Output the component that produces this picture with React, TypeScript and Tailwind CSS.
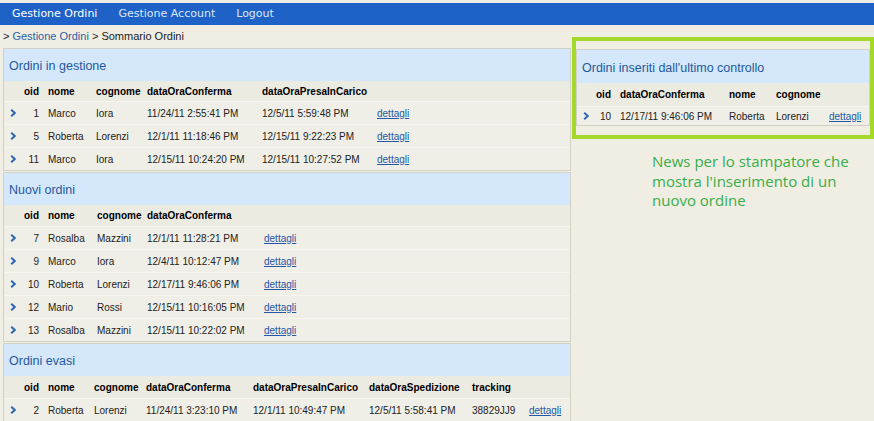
import React from "react";

type Col = { w: number; right?: boolean };

const Arrow = () => (
  <svg width="6" height="8" viewBox="0 0 6 8">
    <path d="M1.2 0.8 L4.8 4 L1.2 7.2" stroke="#2a66b4" strokeWidth="2" fill="none" />
  </svg>
);

function Table({ cols, head, rows, headH, rowH }: { cols: Col[]; head: string[]; rows: string[][]; headH: string; rowH: string }) {
  return (
    <div className="font-['Liberation_Sans',Arial,sans-serif] text-[10px] text-[#222]">
      <div className={`flex items-center font-bold text-black ${headH}`}>
        <div className="w-[18px] shrink-0" />
        {head.map((h, i) => (
          <div key={i} style={{ width: cols[i].w }} className={`shrink-0 whitespace-nowrap ${cols[i].right ? "text-right pr-[5px]" : "pl-[4px]"}`}>
            {h}
          </div>
        ))}
      </div>
      {rows.map((r, ri) => (
        <div key={ri} className={`flex items-center border-t border-[#f6f5f0] bg-[#efeee7] ${rowH}`}>
          <div className="w-[18px] shrink-0 flex justify-center">
            <Arrow />
          </div>
          {r.map((c, i) => (
            <div key={i} style={{ width: cols[i].w }} className={`shrink-0 whitespace-nowrap ${cols[i].right ? "text-right pr-[5px]" : "pl-[4px]"}`}>
              {c}
            </div>
          ))}
          <a className="pl-[4px] text-[#2457a6] underline whitespace-nowrap">dettagli</a>
        </div>
      ))}
    </div>
  );
}

function Panel({ title, headerH, children }: { title: string; headerH: string; children: React.ReactNode }) {
  return (
    <div className="border border-[#d3d1c6] bg-[#ecebe2]">
      <div className={`${headerH} bg-[#d5e7fa] flex items-center pl-[5px] pt-[3px] font-['Liberation_Sans',Arial,sans-serif] text-[12.5px] text-[#1f5a9e]`}>
        {title}
      </div>
      {children}
    </div>
  );
}

export default function App() {
  return (
    <div className="w-[874px] h-[421px] overflow-hidden bg-[#f0eee3] pt-[3px]">
      <div className="h-[22px] bg-[#1e62c8] flex items-center font-['DejaVu_Sans',Verdana,sans-serif] text-[11px]">
        <span className="ml-[12px] text-white">Gestione Ordini</span>
        <span className="ml-[21px] text-[#dde6f6]">Gestione Account</span>
        <span className="ml-[21px] text-[#dde6f6]">Logout</span>
      </div>
      <div className="flex">
        <div className="w-[568px] ml-[3px] shrink-0">
          <div className="h-[23px] flex items-center font-['Liberation_Sans',Arial,sans-serif] text-[11px] text-[#222]">
            &gt; <span className="text-[#2a5ea6] ml-[3px]">Gestione Ordini</span>&nbsp;&gt; Sommario Ordini
          </div>
          <div className="flex flex-col gap-[1px]">
            <Panel title="Ordini in gestione" headerH="h-[32px]">
              <Table
                headH="h-[20px]"
                rowH="h-[23px]"
                cols={[{ w: 22, right: true }, { w: 48 }, { w: 51 }, { w: 115 }, { w: 115 }]}
                head={["oid", "nome", "cognome", "dataOraConferma", "dataOraPresaInCarico"]}
                rows={[
                  ["1", "Marco", "Iora", "11/24/11 2:55:41 PM", "12/5/11 5:59:48 PM"],
                  ["5", "Roberta", "Lorenzi", "12/1/11 11:18:46 PM", "12/15/11 9:22:23 PM"],
                  ["11", "Marco", "Iora", "12/15/11 10:24:20 PM", "12/15/11 10:27:52 PM"],
                ]}
              />
            </Panel>
            <Panel title="Nuovi ordini" headerH="h-[32px]">
              <Table
                headH="h-[21px]"
                rowH="h-[23px]"
                cols={[{ w: 22, right: true }, { w: 49 }, { w: 50 }, { w: 117 }]}
                head={["oid", "nome", "cognome", "dataOraConferma"]}
                rows={[
                  ["7", "Rosalba", "Mazzini", "12/1/11 11:28:21 PM"],
                  ["9", "Marco", "Iora", "12/4/11 10:12:47 PM"],
                  ["10", "Roberta", "Lorenzi", "12/17/11 9:46:06 PM"],
                  ["12", "Mario", "Rossi", "12/15/11 10:16:05 PM"],
                  ["13", "Rosalba", "Mazzini", "12/15/11 10:22:02 PM"],
                ]}
              />
            </Panel>
            <Panel title="Ordini evasi" headerH="h-[32px]">
              <Table
                headH="h-[22px]"
                rowH="h-[23px]"
                cols={[{ w: 22, right: true }, { w: 46 }, { w: 52 }, { w: 107 }, { w: 116 }, { w: 103 }, { w: 57 }]}
                head={["oid", "nome", "cognome", "dataOraConferma", "dataOraPresaInCarico", "dataOraSpedizione", "tracking"]}
                rows={[["2", "Roberta", "Lorenzi", "11/24/11 3:23:10 PM", "12/1/11 10:49:47 PM", "12/5/11 5:58:41 PM", "38829JJ9"]]}
              />
            </Panel>
          </div>
        </div>
        <div className="ml-[1px] w-[302px] shrink-0 mt-[12px]">
          <div className="border-4 border-[#a4d92c] pt-[8px] pb-[9px]">
            <Panel title="Ordini inseriti dall'ultimo controllo" headerH="h-[33px]">
              <Table
                headH="h-[23px]"
                rowH="h-[19px]"
                cols={[{ w: 21, right: true }, { w: 109 }, { w: 47 }, { w: 53 }]}
                head={["oid", "dataOraConferma", "nome", "cognome"]}
                rows={[["10", "12/17/11 9:46:06 PM", "Roberta", "Lorenzi"]]}
              />
            </Panel>
          </div>
          <div className="ml-[80px] mt-[13px] font-['Open_Sans',sans-serif] text-[15px] leading-[19.5px] text-[#38ad48]">
            News per lo stampatore che
            <br />
            mostra l'inserimento di un
            <br />
            nuovo ordine
          </div>
        </div>
      </div>
    </div>
  );
}
